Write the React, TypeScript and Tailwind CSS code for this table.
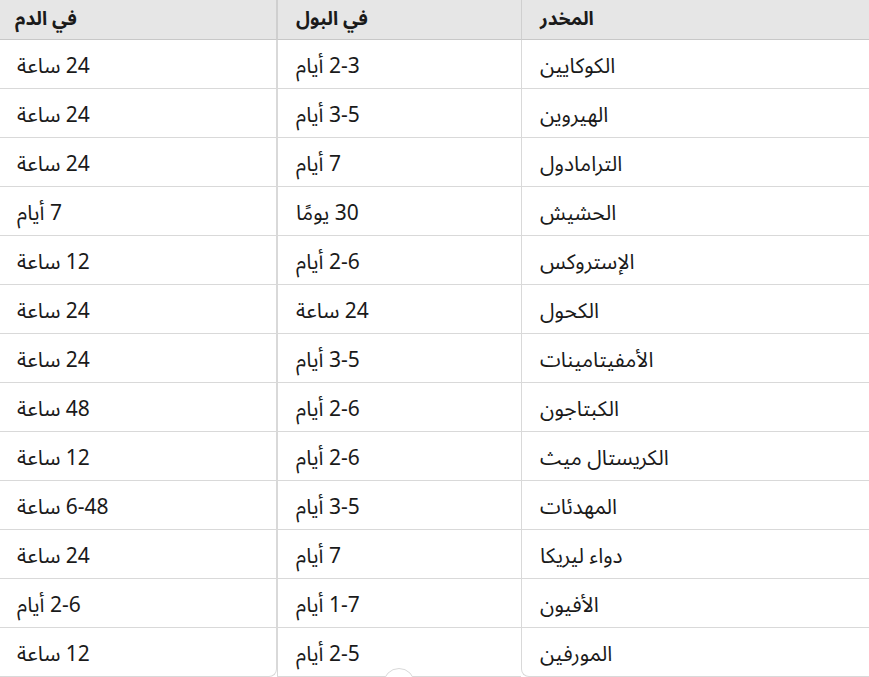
import React from "react";

const rows: [string, string, string][] = [
  ["الكوكايين", "2-3 أيام", "24 ساعة"],
  ["الهيروين", "3-5 أيام", "24 ساعة"],
  ["الترامادول", "7 أيام", "24 ساعة"],
  ["الحشيش", "30 يومًا", "7 أيام"],
  ["الإستروكس", "2-6 أيام", "12 ساعة"],
  ["الكحول", "24 ساعة", "24 ساعة"],
  ["الأمفيتامينات", "3-5 أيام", "24 ساعة"],
  ["الكبتاجون", "2-6 أيام", "48 ساعة"],
  ["الكريستال ميث", "2-6 أيام", "12 ساعة"],
  ["المهدئات", "3-5 أيام", "6-48 ساعة"],
  ["دواء ليريكا", "7 أيام", "24 ساعة"],
  ["الأفيون", "1-7 أيام", "2-6 أيام"],
  ["المورفين", "2-5 أيام", "12 ساعة"],
];

const font = {
  fontFamily: '"Noto Sans Arabic", "Noto Sans", "DejaVu Sans", sans-serif',
};

export default function App() {
  return (
    <div
      className="relative w-[869px] h-[677px] overflow-hidden bg-white text-[#1a1a1a]"
      style={font}
    >
      <div dir="rtl" className="grid grid-cols-[348px_244px_277px] w-[869px]">
        <div className="h-[40px] bg-[#e6e6e6] border-b-[1.5px] border-[#c8c8c8] border-l border-l-[#cfcfcf] pl-[18px] flex items-center justify-end text-[19px] font-bold">
          <span>المخدر</span>
        </div>
        <div className="h-[40px] bg-[#e6e6e6] border-b-[1.5px] border-[#c8c8c8] border-l border-l-[#cfcfcf] pl-[18px] flex items-center justify-end text-[19px] font-bold">
          <span>في البول</span>
        </div>
        <div className="h-[40px] bg-[#e6e6e6] border-b-[1.5px] border-[#c8c8c8] border-r border-r-[#cfcfcf] pl-[15px] flex items-center justify-end text-[19px] font-bold">
          <span>في الدم</span>
        </div>
        {rows.map((r, i) => {
          const last = i === rows.length - 1;
          return (
            <React.Fragment key={i}>
              <div
                className={`h-[49px] pt-[6px] border-b border-[#d9d9d9] border-l pl-[18px] flex items-center justify-end text-[21px] ${last ? "rounded-bl-[8px]" : ""}`}
              >
                <span>{r[0]}</span>
              </div>
              <div className="h-[49px] pt-[6px] border-b border-[#d9d9d9] border-l pl-[18px] flex items-center justify-end text-[21px]">
                <span>{r[1]}</span>
              </div>
              <div
                className={`h-[49px] pt-[6px] border-b border-[#d9d9d9] border-r pl-[17px] flex items-center justify-end text-[21px] ${last ? "rounded-br-[8px]" : ""}`}
              >
                <span>{r[2]}</span>
              </div>
            </React.Fragment>
          );
        })}
      </div>
      <div className="absolute left-[383px] top-[668px] w-[32px] h-[32px] rounded-full bg-white border border-[#d9d9d9]" />
    </div>
  );
}
